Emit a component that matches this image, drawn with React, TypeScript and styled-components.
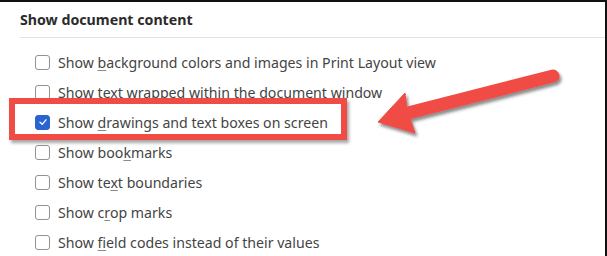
import React from 'react'
import styled, { createGlobalStyle } from 'styled-components'

const Global = createGlobalStyle`
  html, body {
    margin: 0;
    padding: 0;
    background: #ffffff;
  }
  body {
    font-family: 'Noto Sans', 'Open Sans', sans-serif;
  }
`

const Page = styled.div`
  position: relative;
  width: 607px;
  height: 256px;
  box-sizing: border-box;
  border-top: 2px solid #111;
  border-right: 2px solid #111;
  background: #fff;
  overflow: hidden;
`

const Header = styled.div`
  margin-left: 20px;
  height: 35px;
  display: flex;
  align-items: center;
  border-bottom: 1px solid #e3e3e3;
  font-size: 14.2px;
  font-weight: 700;
  color: #2b2b2b;
`

const List = styled.div`
  display: flex;
  flex-direction: column;
  padding: 9px 0 0 35px;
`

const Row = styled.div<{ $marked?: boolean }>`
  position: relative;
  height: 30px;
  display: flex;
  align-items: center;
  gap: 8px;
  font-size: 14.15px;
  color: #444;

  ${(p) =>
    p.$marked &&
    `
    &::after {
      content: '';
      position: absolute;
      left: -26px;
      top: -9px;
      width: 338px;
      height: 42px;
      box-sizing: border-box;
      border: 6px solid #f04c45;
      box-shadow: 2px 3px 3px rgba(0, 0, 0, 0.35);
      pointer-events: none;
    }
  `}
`

const Box = styled.span<{ $checked?: boolean }>`
  width: 15px;
  height: 15px;
  box-sizing: border-box;
  border-radius: 3px;
  border: 1px solid ${(p) => (p.$checked ? '#2a64d3' : '#929292')};
  background: ${(p) => (p.$checked ? '#2a64d3' : '#fff')};
  display: flex;
  align-items: center;
  justify-content: center;
  flex-shrink: 0;
`

const Key = styled.span`
  text-decoration: underline;
  text-decoration-color: #8a8a8a;
  text-underline-offset: 2px;
`

const Arrow = styled.svg`
  position: absolute;
  left: 0;
  top: -2px;
  pointer-events: none;
`

const Check = ({ checked }: { checked?: boolean }) => (
  <Box $checked={checked}>
    {checked && (
      <svg width="10" height="10" viewBox="0 0 10 10">
        <path d="M2 5.2 L4.2 7.3 L8 2.8" fill="none" stroke="#fff" strokeWidth="1.3" strokeLinecap="round" strokeLinejoin="round" />
      </svg>
    )}
  </Box>
)

const App = () => {
  return (
    <Page>
      <Global />
      <Header>Show document content</Header>
      <List>
        <Row>
          <Check />
          <span>
            Show <Key>b</Key>ackground colors and images in Print Layout view
          </span>
        </Row>
        <Row>
          <Check />
          <span>Show text wrapped within the document window</span>
        </Row>
        <Row $marked>
          <Check checked />
          <span>
            Show <Key>d</Key>rawings and text boxes on screen
          </span>
        </Row>
        <Row>
          <Check />
          <span>
            Show boo<Key>k</Key>marks
          </span>
        </Row>
        <Row>
          <Check />
          <span>
            Show te<Key>x</Key>t boundaries
          </span>
        </Row>
        <Row>
          <Check />
          <span>
            Show c<Key>r</Key>op marks
          </span>
        </Row>
        <Row>
          <Check />
          <span>
            Show <Key>f</Key>ield codes instead of their values
          </span>
        </Row>
      </List>
      <Arrow width="607" height="256" viewBox="0 0 607 256">
        <defs>
          <filter id="sh" x="-10%" y="-20%" width="130%" height="160%">
            <feDropShadow dx="2" dy="3" stdDeviation="1.5" floodColor="#333" floodOpacity="0.55" />
          </filter>
        </defs>
        <g filter="url(#sh)" fill="#f04c45" stroke="#f04c45">
          <line x1="404" y1="114" x2="553" y2="76" strokeWidth="13" strokeLinecap="round" />
          <polygon points="378,122 405,93 407,110 415,133" strokeWidth="1" strokeLinejoin="round" />
        </g>
      </Arrow>
    </Page>
  )
}

export default App
